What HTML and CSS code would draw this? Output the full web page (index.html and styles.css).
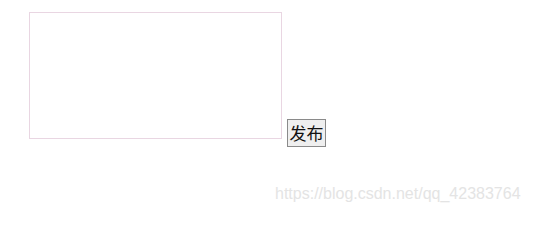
FILE: index.html
```html
<!DOCTYPE html>
<html>
<head>
<meta charset="utf-8">
<link rel="stylesheet" href="styles.css">
</head>
<body>
<div class="page">
  <div class="composer">
    <textarea class="input"></textarea>
    <button class="publish">发布</button>
  </div>
  <div class="watermark">https://blog.csdn.net/qq_42383764</div>
</div>
</body>
</html>
```
FILE: styles.css
```css
html, body {
  margin: 0;
  padding: 0;
  background: #ffffff;
}
.page {
  width: 533px;
  height: 214px;
  position: relative;
  overflow: hidden;
}
.composer {
  display: flex;
  align-items: flex-start;
  padding: 12px 0 0 29px;
  gap: 5px;
}
.input {
  width: 251px;
  height: 125px;
  margin: 0;
  padding: 0;
  border: 1px solid #e9d6e2;
  resize: none;
  outline: none;
  background: #fff;
  box-sizing: content-box;
}
.publish {
  margin: 107px 0 0 0;
  width: 39px;
  height: 28px;
  box-sizing: border-box;
  padding: 0;
  border: 1px solid #8a8a8a;
  border-radius: 0;
  background: #efefef;
  color: #111;
  font-family: "Noto Sans CJK SC", sans-serif;
  font-size: 17px;
  line-height: 24px;
}
.watermark {
  position: absolute;
  left: 275px;
  top: 184px;
  font-family: "Liberation Sans", Arial, sans-serif;
  font-size: 16px;
  line-height: 20px;
  color: #e4e4e4;
  white-space: nowrap;
}
```
